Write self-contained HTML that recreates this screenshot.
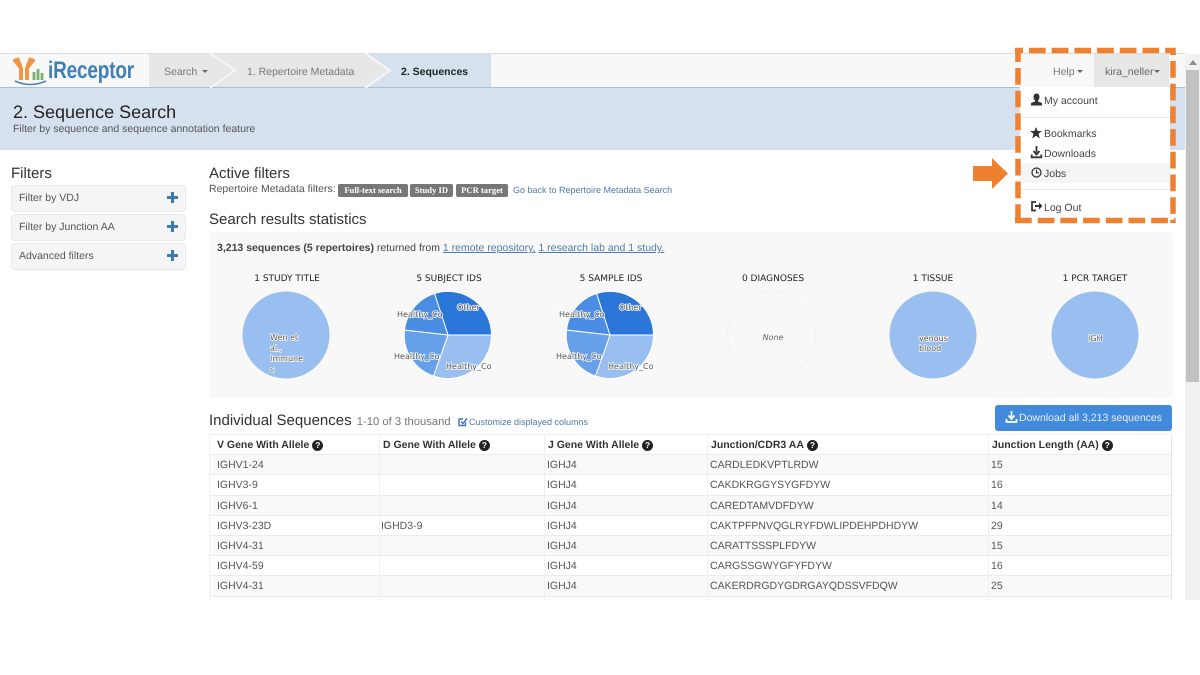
<!DOCTYPE html>
<html><head><meta charset="utf-8">
<style>
html,body{margin:0;padding:0;background:#fff;width:1200px;height:675px;overflow:hidden}
body{position:relative;font-family:"Liberation Sans",sans-serif;color:#444;text-rendering:geometricPrecision}
.a{position:absolute;white-space:nowrap}
.t{position:absolute;white-space:nowrap;font-size:10.5px;color:#555;line-height:14px}
.th{position:absolute;white-space:nowrap;font-size:10.5px;font-weight:bold;color:#333;line-height:14px}
.f{position:absolute;left:11px;width:173px;height:25px;background:#f5f5f5;border:1px solid #e8e8e8;border-radius:4px;font-size:10.5px;color:#555;line-height:24px;text-indent:7px}
.f i{position:absolute;left:155px;top:6px;width:11px;height:11px;background:linear-gradient(#3b7ab5,#3b7ab5) center/11px 3px no-repeat,linear-gradient(#3b7ab5,#3b7ab5) center/3px 11px no-repeat}
.r{position:absolute;left:209px;width:963px;box-sizing:border-box;border-bottom:1px solid #ececec;border-left:1px solid #f0f0f0;border-right:1px solid #e4e4e4}
.b{position:absolute;top:184px;height:13px;background:#777;color:#fff;font:bold 8.6px/13px "Liberation Serif",serif;text-align:center;border-radius:2px}
.m{position:absolute;left:1044px;font-size:10.5px;color:#444;line-height:14px;white-space:nowrap}
svg{position:absolute;overflow:visible}
svg text{font-family:"DejaVu Sans",sans-serif}
.l{font-size:8px;fill:#555;stroke:#fff;stroke-width:1.5px;paint-order:stroke;stroke-linejoin:round}
.h{font-size:9px;fill:#222;text-anchor:middle}
.q{display:inline-block;width:11px;height:11px;border-radius:50%;background:#222;color:#fff;font:bold 8.5px/11px "Liberation Sans",sans-serif;text-align:center;vertical-align:0;margin-left:3px}
.c{display:inline-block;border:3.5px solid transparent;border-top-color:#666;border-bottom:0;vertical-align:2px;margin-left:2px}
</style></head><body>

<!-- top -->
<div class="a" style="left:0;top:53px;width:1185px;height:1px;background:#dcdcdc"></div>
<div class="a" style="left:0;top:54px;width:1185px;height:33px;background:#f8f8f8"></div>
<div class="a" style="left:0;top:87px;width:1185px;height:1px;background:#a9bfdc"></div>
<div class="a" style="left:0;top:88px;width:1185px;height:62px;background:#d5e1ef"></div>

<!-- logo -->
<svg style="left:0;top:54px" width="150" height="33" viewBox="0 0 150 33">
<path d="M21 26V14L14 5M21 14L17 4" stroke="#ef9440" stroke-width="3.8" fill="none"/>
<path d="M27 26V14L34 5M27 14L31 4" stroke="#ef9440" stroke-width="3.8" fill="none"/>
<path d="M34 26v-8M38 26v-11M42 26v-7" stroke="#7cb26b" stroke-width="2.8" fill="none"/>
<path d="M15 27q15 7 31 0" stroke="#4f84bd" stroke-width="1.6" fill="none"/>
</svg>
<div class="a" style="left:48px;top:57px;font:bold 24px/28px 'Liberation Sans',sans-serif;color:#3d7fb8;transform:scaleX(.79);transform-origin:0 0;letter-spacing:-.2px">iReceptor</div>

<!-- breadcrumb -->
<svg style="left:149px;top:54px" width="343" height="33">
<rect width="342" height="33" fill="#e7e7e7"/>
<path d="M216 0h126v33h-126l25-16.500z" fill="#d5e1ef"/>
<path d="M61 -1l25 17.500-25 17.500" fill="none" stroke="#f5f5f5" stroke-width="2"/>
<path d="M216 -1l25 17.500-25 17.500" fill="none" stroke="#f5f5f5" stroke-width="2"/>
</svg>
<div class="a" style="left:164px;top:65px;font-size:10.5px;line-height:14px;color:#777">Search <span class="c"></span></div>
<div class="a" style="left:247px;top:65px;font-size:10.5px;line-height:14px;color:#777">1. Repertoire Metadata</div>
<div class="a" style="left:401px;top:65px;font-size:10.5px;line-height:14px;color:#222;font-weight:bold">2. Sequences</div>

<div class="a" style="left:13px;top:101px;font-size:18px;line-height:22px;color:#222">2. Sequence Search</div>
<div class="a" style="left:13px;top:122px;font-size:10.5px;line-height:14px;color:#555">Filter by sequence and sequence annotation feature</div>

<!-- filters -->
<div class="a" style="left:11px;top:165px;font-size:15px;line-height:18px;color:#333">Filters</div>
<div class="f" style="top:185px">Filter by VDJ<i></i></div>
<div class="f" style="top:214px">Filter by Junction AA<i></i></div>
<div class="f" style="top:243px">Advanced filters<i></i></div>

<!-- active filters -->
<div class="a" style="left:209px;top:165px;font-size:15px;line-height:18px;color:#333">Active filters</div>
<div class="a" style="left:209px;top:182px;font-size:10.5px;line-height:14px;color:#555">Repertoire Metadata filters:</div>
<div class="b" style="left:338px;width:70px">Full-text search</div>
<div class="b" style="left:410px;width:43px">Study ID</div>
<div class="b" style="left:456px;width:52px">PCR target</div>
<div class="a" style="left:513px;top:183px;font-size:9px;line-height:14px;color:#4f7bab">Go back to Repertoire Metadata Search</div>

<div class="a" style="left:209px;top:211px;font-size:15px;line-height:18px;color:#333">Search results statistics</div>

<!-- stats -->
<div class="a" style="left:209px;top:232px;width:964px;height:166px;background:#f8f8f8;border-radius:4px"></div>
<div class="a" style="left:217px;top:241px;font-size:10.5px;line-height:14px;color:#444"><b>3,213 sequences (5 repertoires)</b> returned from <span style="color:#4f7bab;text-decoration:underline">1 remote repository,</span> <span style="color:#4f7bab;text-decoration:underline">1 research lab and 1 study.</span></div>

<svg style="left:0;top:0" width="1200" height="675">
<text class="h" x="287" y="281">1 STUDY TITLE</text>
<text class="h" x="449" y="281">5 SUBJECT IDS</text>
<text class="h" x="611" y="281">5 SAMPLE IDS</text>
<text class="h" x="773" y="281">0 DIAGNOSES</text>
<text class="h" x="933" y="281">1 TISSUE</text>
<text class="h" x="1095" y="281">1 PCR TARGET</text>

<circle cx="286" cy="335" r="43.500" fill="#98bff0"/>
<text class="l" x="270" y="340">Wen et</text>
<text class="l" x="270" y="351">al.,</text>
<text class="l" x="270" y="361">Immune</text>
<text class="l" x="270" y="372">c</text>

<g stroke="#fff" stroke-width="1">
<path d="M448 335L434.500 293.500A43.500 43.500 0 0 1 491.500 335Z" fill="#2b77d9"/>
<path d="M448 335H491.500A43.500 43.500 0 0 1 433.500 376Z" fill="#98bff0"/>
<path d="M448 335L433.500 376A43.500 43.500 0 0 1 404.500 330Z" fill="#66a0e8"/>
<path d="M448 335L404.500 330A43.500 43.500 0 0 1 434.500 293.500Z" fill="#4a8de2"/>
<path d="M610 335L596.500 293.500A43.500 43.500 0 0 1 653.500 335Z" fill="#2b77d9"/>
<path d="M610 335H653.500A43.500 43.500 0 0 1 595.500 376Z" fill="#98bff0"/>
<path d="M610 335L595.500 376A43.500 43.500 0 0 1 566.500 330Z" fill="#66a0e8"/>
<path d="M610 335L566.500 330A43.500 43.500 0 0 1 596.500 293.500Z" fill="#4a8de2"/>
</g>
<text class="l" x="457" y="310">Other</text>
<text class="l" x="397" y="317">Healthy_Co</text>
<text class="l" x="394" y="359">Healthy_Co</text>
<text class="l" x="446" y="369">Healthy_Co</text>
<text class="l" x="619" y="310">Other</text>
<text class="l" x="559" y="317">Healthy_Co</text>
<text class="l" x="556" y="359">Healthy_Co</text>
<text class="l" x="608" y="369">Healthy_Co</text>

<circle cx="771.500" cy="335" r="44" fill="#f8f8f8" stroke="#f2f2f2" stroke-width="1"/>
<text x="773" y="340" style="font-size:8px;font-style:italic;fill:#666;text-anchor:middle">None</text>

<circle cx="933" cy="335" r="43.500" fill="#98bff0"/>
<text class="l" x="919" y="341">venous</text>
<text class="l" x="919" y="351">blood</text>
<circle cx="1095" cy="335" r="43.500" fill="#98bff0"/>
<text class="l" x="1088" y="341">IGH</text>
</svg>

<!-- Individual sequences -->
<div class="a" style="left:209px;top:412px;font-size:15px;line-height:18px;color:#333">Individual Sequences <span style="font-size:11.25px;color:#777;margin-left:1px">1-10 of 3 thousand</span></div>
<svg style="left:458px;top:417px" width="10" height="10" viewBox="0 0 10 10"><path d="M7.500 5.500V8.500H1V2H5" fill="none" stroke="#3d78b5" stroke-width="1.400"/><path d="M3 4.500l2 2 4-5" fill="none" stroke="#3d78b5" stroke-width="1.500"/></svg>
<div class="a" style="left:469px;top:415px;font-size:9px;line-height:14px;color:#4f7bab">Customize displayed columns</div>

<div class="a" style="left:995px;top:405px;width:177px;height:26px;background:#428bdc;border-radius:3px;color:#e4effa;font-size:10.5px;line-height:26px;white-space:nowrap"><svg style="left:11px;top:6px" width="11" height="12" viewBox="0 0 11 12"><path d="M5.500 0v6M2.500 4.500l3 3.500 3-3.500M.5 8v3h10V8" fill="none" stroke="#fff" stroke-width="1.800"/></svg><span style="position:absolute;left:24px">Download all 3,213 sequences</span></div>

<!-- table -->
<div class="r" style="top:434px;height:21px;background:#fff;border-top:1px solid #eee"></div>
<div class="r" style="top:455px;height:20px;background:#f9f9f9"></div>
<div class="r" style="top:475px;height:21px;background:#fff"></div>
<div class="r" style="top:496px;height:20px;background:#f9f9f9"></div>
<div class="r" style="top:516px;height:20px;background:#fff"></div>
<div class="r" style="top:536px;height:20px;background:#f9f9f9"></div>
<div class="r" style="top:556px;height:20px;background:#fff"></div>
<div class="r" style="top:576px;height:21px;background:#f9f9f9"></div>
<div class="r" style="top:597px;height:3px;background:#fff;border-bottom:0"></div>
<div class="a" style="left:379px;top:434px;width:1px;height:166px;background:#efefef"></div>
<div class="a" style="left:544px;top:434px;width:1px;height:166px;background:#efefef"></div>
<div class="a" style="left:707px;top:434px;width:1px;height:166px;background:#efefef"></div>
<div class="a" style="left:988px;top:434px;width:1px;height:166px;background:#efefef"></div>

<div class="th" style="left:217px;top:438px">V Gene With Allele<span class="q">?</span></div>
<div class="th" style="left:383px;top:438px">D Gene With Allele<span class="q">?</span></div>
<div class="th" style="left:548px;top:438px">J Gene With Allele<span class="q">?</span></div>
<div class="th" style="left:711px;top:438px">Junction/CDR3 AA<span class="q">?</span></div>
<div class="th" style="left:992px;top:438px">Junction Length (AA)<span class="q">?</span></div>

<div class="t" style="left:217px;top:458px">IGHV1-24</div><div class="t" style="left:547px;top:458px">IGHJ4</div><div class="t" style="left:710px;top:458px">CARDLEDKVPTLRDW</div><div class="t" style="left:991px;top:458px">15</div>
<div class="t" style="left:217px;top:478px">IGHV3-9</div><div class="t" style="left:547px;top:478px">IGHJ4</div><div class="t" style="left:710px;top:478px">CAKDKRGGYSYGFDYW</div><div class="t" style="left:991px;top:478px">16</div>
<div class="t" style="left:217px;top:499px">IGHV6-1</div><div class="t" style="left:547px;top:499px">IGHJ4</div><div class="t" style="left:710px;top:499px">CAREDTAMVDFDYW</div><div class="t" style="left:991px;top:499px">14</div>
<div class="t" style="left:217px;top:519px">IGHV3-23D</div><div class="t" style="left:381px;top:519px">IGHD3-9</div><div class="t" style="left:547px;top:519px">IGHJ4</div><div class="t" style="left:710px;top:519px">CAKTPFPNVQGLRYFDWLIPDEHPDHDYW</div><div class="t" style="left:991px;top:519px">29</div>
<div class="t" style="left:217px;top:539px">IGHV4-31</div><div class="t" style="left:547px;top:539px">IGHJ4</div><div class="t" style="left:710px;top:539px">CARATTSSSPLFDYW</div><div class="t" style="left:991px;top:539px">15</div>
<div class="t" style="left:217px;top:559px">IGHV4-59</div><div class="t" style="left:547px;top:559px">IGHJ4</div><div class="t" style="left:710px;top:559px">CARGSSGWYGFYFDYW</div><div class="t" style="left:991px;top:559px">16</div>
<div class="t" style="left:217px;top:579px">IGHV4-31</div><div class="t" style="left:547px;top:579px">IGHJ4</div><div class="t" style="left:710px;top:579px">CAKERDRGDYGDRGAYQDSSVFDQW</div><div class="t" style="left:991px;top:579px">25</div>

<!-- scrollbar -->
<div class="a" style="left:1185px;top:54px;width:15px;height:546px;background:#f1f1f1"></div>
<div class="a" style="left:1186px;top:70px;width:13px;height:312px;background:#c1c1c1"></div>
<div class="a" style="left:1189px;top:60px;width:0;height:0;border:4px solid transparent;border-top:0;border-bottom:5px solid #8c8c8c"></div>

<!-- nav right + dropdown -->
<div class="a" style="left:1020px;top:54px;width:74px;height:33px;background:#f8f8f8"></div>
<div class="a" style="left:1094px;top:54px;width:75px;height:33px;background:#e7e7e7"></div>
<div class="a" style="left:1053px;top:65px;font-size:10.5px;line-height:14px;color:#777">Help<span class="c" style="border-width:3px;border-bottom:0"></span></div>
<div class="a" style="left:1105px;top:65px;font-size:10.5px;line-height:14px;color:#666">kira_neller<span class="c" style="border-width:3px;border-bottom:0;margin-left:1px"></span></div>
<div class="a" style="left:1020px;top:87px;width:150px;height:132px;background:#fff"></div>
<div class="a" style="left:1020px;top:117px;width:150px;height:1px;background:#e8e8e8"></div>
<div class="a" style="left:1020px;top:163px;width:150px;height:20px;background:#f5f5f5"></div>
<div class="a" style="left:1020px;top:189px;width:150px;height:1px;background:#e8e8e8"></div>

<svg style="left:1030px;top:93px" width="13" height="13" viewBox="0 0 13 13"><path d="M6.500 0.500c2 0 3 1.500 3 3.500 0 1.500-.7 2.800-1.500 3.500v1l4 1.500v2.500H1V10l4-1.500v-1C4.200 6.800 3.500 5.500 3.500 4c0-2 1-3.500 3-3.500z" fill="#333"/></svg>
<div class="m" style="top:94px">My account</div>
<svg style="left:1030px;top:127px" width="12" height="12" viewBox="0 0 12 12"><path d="M6 0l1.600 4H12L8.500 6.800 9.800 11.500 6 8.800 2.200 11.500 3.500 6.800 0 4h4.400z" fill="#333"/></svg>
<div class="m" style="top:127px">Bookmarks</div>
<svg style="left:1031px;top:146px" width="11" height="12" viewBox="0 0 11 12"><path d="M5.500 0v6.500M2.500 5l3 3.500 3-3.500M.7 8.500v2.800h9.600V8.500" fill="none" stroke="#333" stroke-width="1.800"/></svg>
<div class="m" style="top:147px">Downloads</div>
<svg style="left:1031px;top:167px" width="11" height="11" viewBox="0 0 11 11"><circle cx="5.500" cy="5.500" r="4.500" fill="none" stroke="#333" stroke-width="1.300"/><path d="M5.500 2.500v3.300h2.500" fill="none" stroke="#333" stroke-width="1.100"/></svg>
<div class="m" style="top:167px">Jobs</div>
<svg style="left:1031px;top:201px" width="12" height="11" viewBox="0 0 12 11"><path d="M5 1H1v8.500h4" fill="none" stroke="#333" stroke-width="1.700"/><path d="M4 4h4V1.500L11.500 5 8 8.500V6H4z" fill="#333"/></svg>
<div class="m" style="top:201px">Log Out</div>

<!-- dashed highlight -->
<svg style="left:0;top:0" width="1200" height="675">
<g fill="none" stroke="#ee8030" stroke-width="5.500" stroke-dasharray="16.700 6">
<path d="M1015 50.500H1175.500" stroke-dashoffset="8.700"/>
<path d="M1018 48V223" stroke-dashoffset="2.700"/>
<path d="M1173 48V223" stroke-dashoffset="9.700"/>
<path d="M1015 220.500H1175.500"/>
</g>
<path d="M973 166h19v-8l16 15.500-16 15.500v-8h-19z" fill="#ee8030"/>
</svg>

</body></html>
